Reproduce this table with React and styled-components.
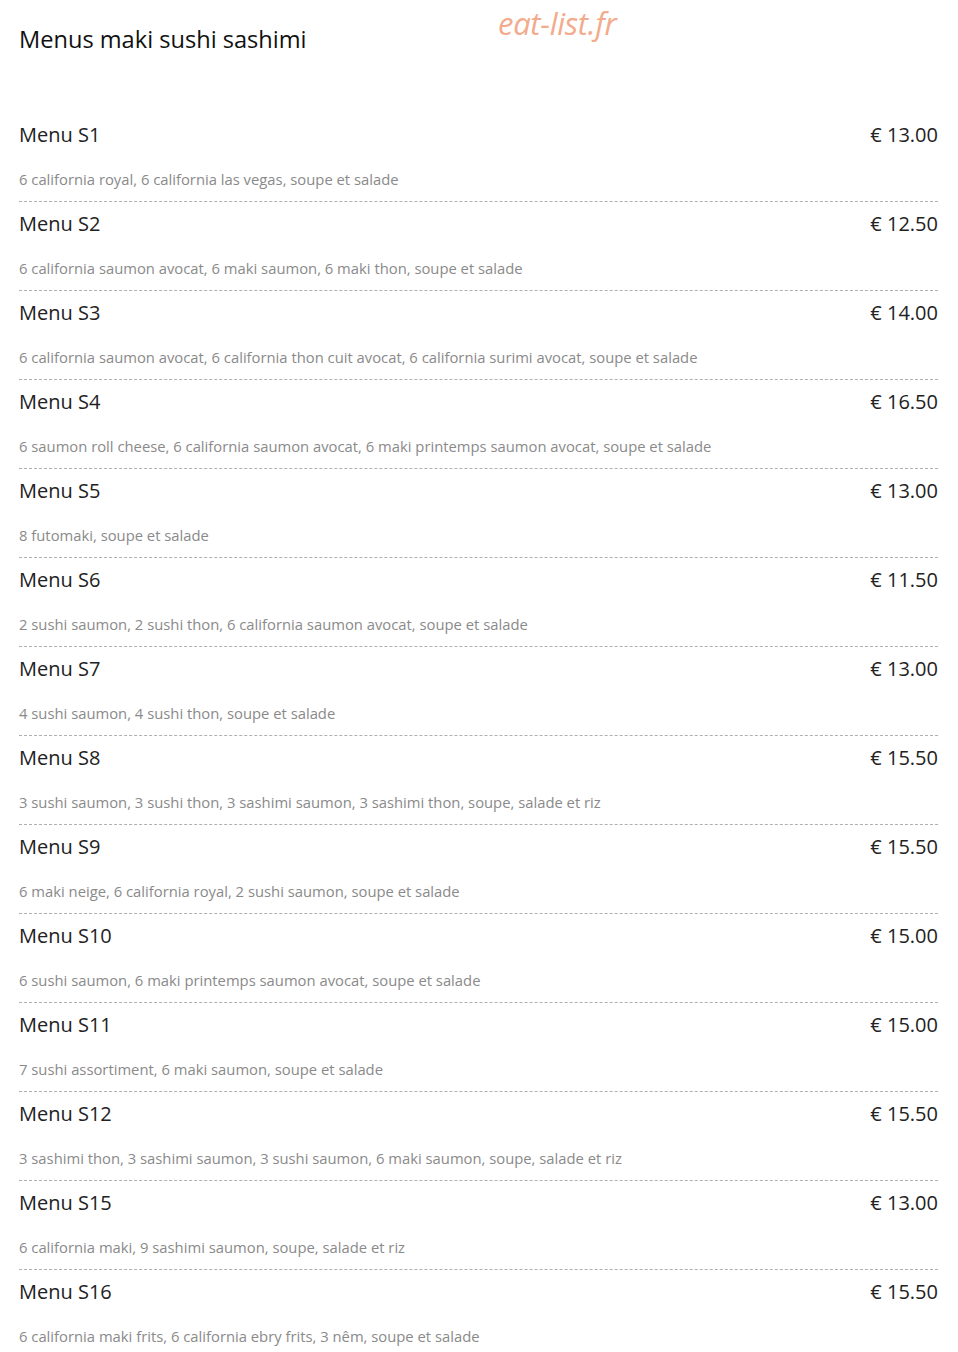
import React from 'react';
import styled, { createGlobalStyle } from 'styled-components';

const menus = [
  { name: 'Menu S1', price: '€ 13.00', desc: '6 california royal, 6 california las vegas, soupe et salade' },
  { name: 'Menu S2', price: '€ 12.50', desc: '6 california saumon avocat, 6 maki saumon, 6 maki thon, soupe et salade' },
  { name: 'Menu S3', price: '€ 14.00', desc: '6 california saumon avocat, 6 california thon cuit avocat, 6 california surimi avocat, soupe et salade' },
  { name: 'Menu S4', price: '€ 16.50', desc: '6 saumon roll cheese, 6 california saumon avocat, 6 maki printemps saumon avocat, soupe et salade' },
  { name: 'Menu S5', price: '€ 13.00', desc: '8 futomaki, soupe et salade' },
  { name: 'Menu S6', price: '€ 11.50', desc: '2 sushi saumon, 2 sushi thon, 6 california saumon avocat, soupe et salade' },
  { name: 'Menu S7', price: '€ 13.00', desc: '4 sushi saumon, 4 sushi thon, soupe et salade' },
  { name: 'Menu S8', price: '€ 15.50', desc: '3 sushi saumon, 3 sushi thon, 3 sashimi saumon, 3 sashimi thon, soupe, salade et riz' },
  { name: 'Menu S9', price: '€ 15.50', desc: '6 maki neige, 6 california royal, 2 sushi saumon, soupe et salade' },
  { name: 'Menu S10', price: '€ 15.00', desc: '6 sushi saumon, 6 maki printemps saumon avocat, soupe et salade' },
  { name: 'Menu S11', price: '€ 15.00', desc: '7 sushi assortiment, 6 maki saumon, soupe et salade' },
  { name: 'Menu S12', price: '€ 15.50', desc: '3 sashimi thon, 3 sashimi saumon, 3 sushi saumon, 6 maki saumon, soupe, salade et riz' },
  { name: 'Menu S15', price: '€ 13.00', desc: '6 california maki, 9 sashimi saumon, soupe, salade et riz' },
  { name: 'Menu S16', price: '€ 15.50', desc: '6 california maki frits, 6 california ebry frits, 3 nêm, soupe et salade' },
];

function App() {
  return (
    <>
      <GlobalStyle />
      <Page>
        <Watermark>eat-list.fr</Watermark>
        <Heading>Menus maki sushi sashimi</Heading>
        <List>
          {menus.map((m, i) => (
            <Item key={m.name} last={i === menus.length - 1}>
              <TopLine>
                <Name>{m.name}</Name>
                <Price>{m.price}</Price>
              </TopLine>
              <Desc>{m.desc}</Desc>
            </Item>
          ))}
        </List>
      </Page>
    </>
  );
}

const GlobalStyle = createGlobalStyle`
  body {
    margin: 0;
    background: #fff;
    font-family: "Open Sans", "Noto Sans", sans-serif;
  }
`;

const Page = styled.div`
  position: relative;
  padding: 0 20px 0 19px;
  height: 1352px;
  overflow: hidden;
`;

const Watermark = styled.div`
  position: absolute;
  left: 498px;
  top: 2px;
  font-size: 31px;
  font-style: italic;
  color: #f2ab8c;
  letter-spacing: -0.3px;
`;

const Heading = styled.h1`
  margin: 0;
  padding-top: 24px;
  font-size: 23.6px;
  line-height: 30px;
  font-weight: 400;
  color: #111;
`;

const List = styled.div`
  display: flex;
  flex-direction: column;
  margin-top: 59px;
`;

const Item = styled.div`
  padding: 9px 0 12px;
  border-bottom: ${p => (p.last ? 'none' : '1px dashed #b0b0b0')};
`;

const TopLine = styled.div`
  display: flex;
  justify-content: space-between;
  align-items: center;
`;

const Name = styled.div`
  font-size: 20px;
  line-height: 26px;
  color: #222;
`;

const Price = styled.div`
  font-size: 20px;
  line-height: 26px;
  color: #222;
`;

const Desc = styled.div`
  margin-top: 21px;
  font-size: 14.8px;
  line-height: 20px;
  color: #8a8a8a;
`;

export default App;
